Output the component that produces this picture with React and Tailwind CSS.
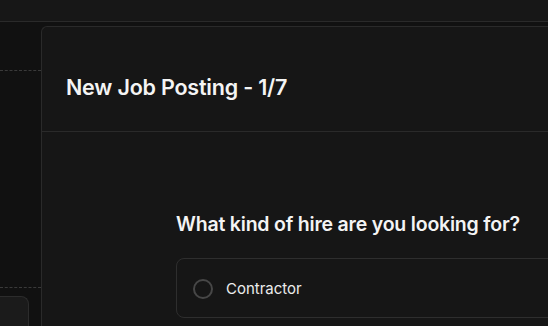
export default function App() {
  return (
    <div
      className="flex h-[326px] w-[548px] flex-col overflow-hidden bg-[#111111] text-white"
      style={{ fontFamily: "Inter, 'Noto Sans', sans-serif" }}
    >
      <div className="h-[22px] shrink-0 border-b border-[#2a2a2a] bg-[#171717]" />
      <div className="flex min-h-0 flex-1">
        <aside className="flex w-[41px] shrink-0 flex-col">
          <div className="h-[49px] shrink-0 border-b border-dashed border-[#3a3a3a]" />
          <div className="h-[217px] shrink-0 border-b border-dashed border-[#3a3a3a]" />
          <div className="mt-[8px] h-[40px] w-[29px] shrink-0 rounded-tr-lg border-r border-t border-[#2c2c2c] bg-[#1b1b1b]" />
        </aside>
        <section className="mt-[4px] w-[640px] shrink-0 rounded-tl-md border-l border-t border-[#2a2a2a] bg-[#161616]">
          <header className="flex h-[105px] items-center border-b border-[#2a2a2a] px-6 pt-[17px]">
            <h1 className="text-[21.5px] font-semibold tracking-[-0.2px] text-[#f4f4f4]">
              New Job Posting - 1/7
            </h1>
          </header>
          <div className="pl-[134px] pt-[79px]">
            <h2 className="text-[19.5px] font-semibold leading-[26px] tracking-[-0.2px] text-[#f4f4f4]">
              What kind of hire are you looking for?
            </h2>
            <div className="mt-[21px] flex h-[60px] w-[420px] items-center gap-[13px] rounded-lg border border-[#2e2e2e] px-[16px] pt-[2px]">
              <span className="h-[20px] w-[20px] rounded-full border-2 border-[#474747]" />
              <span className="text-[15px] text-[#ececec]">Contractor</span>
            </div>
          </div>
        </section>
      </div>
    </div>
  );
}
